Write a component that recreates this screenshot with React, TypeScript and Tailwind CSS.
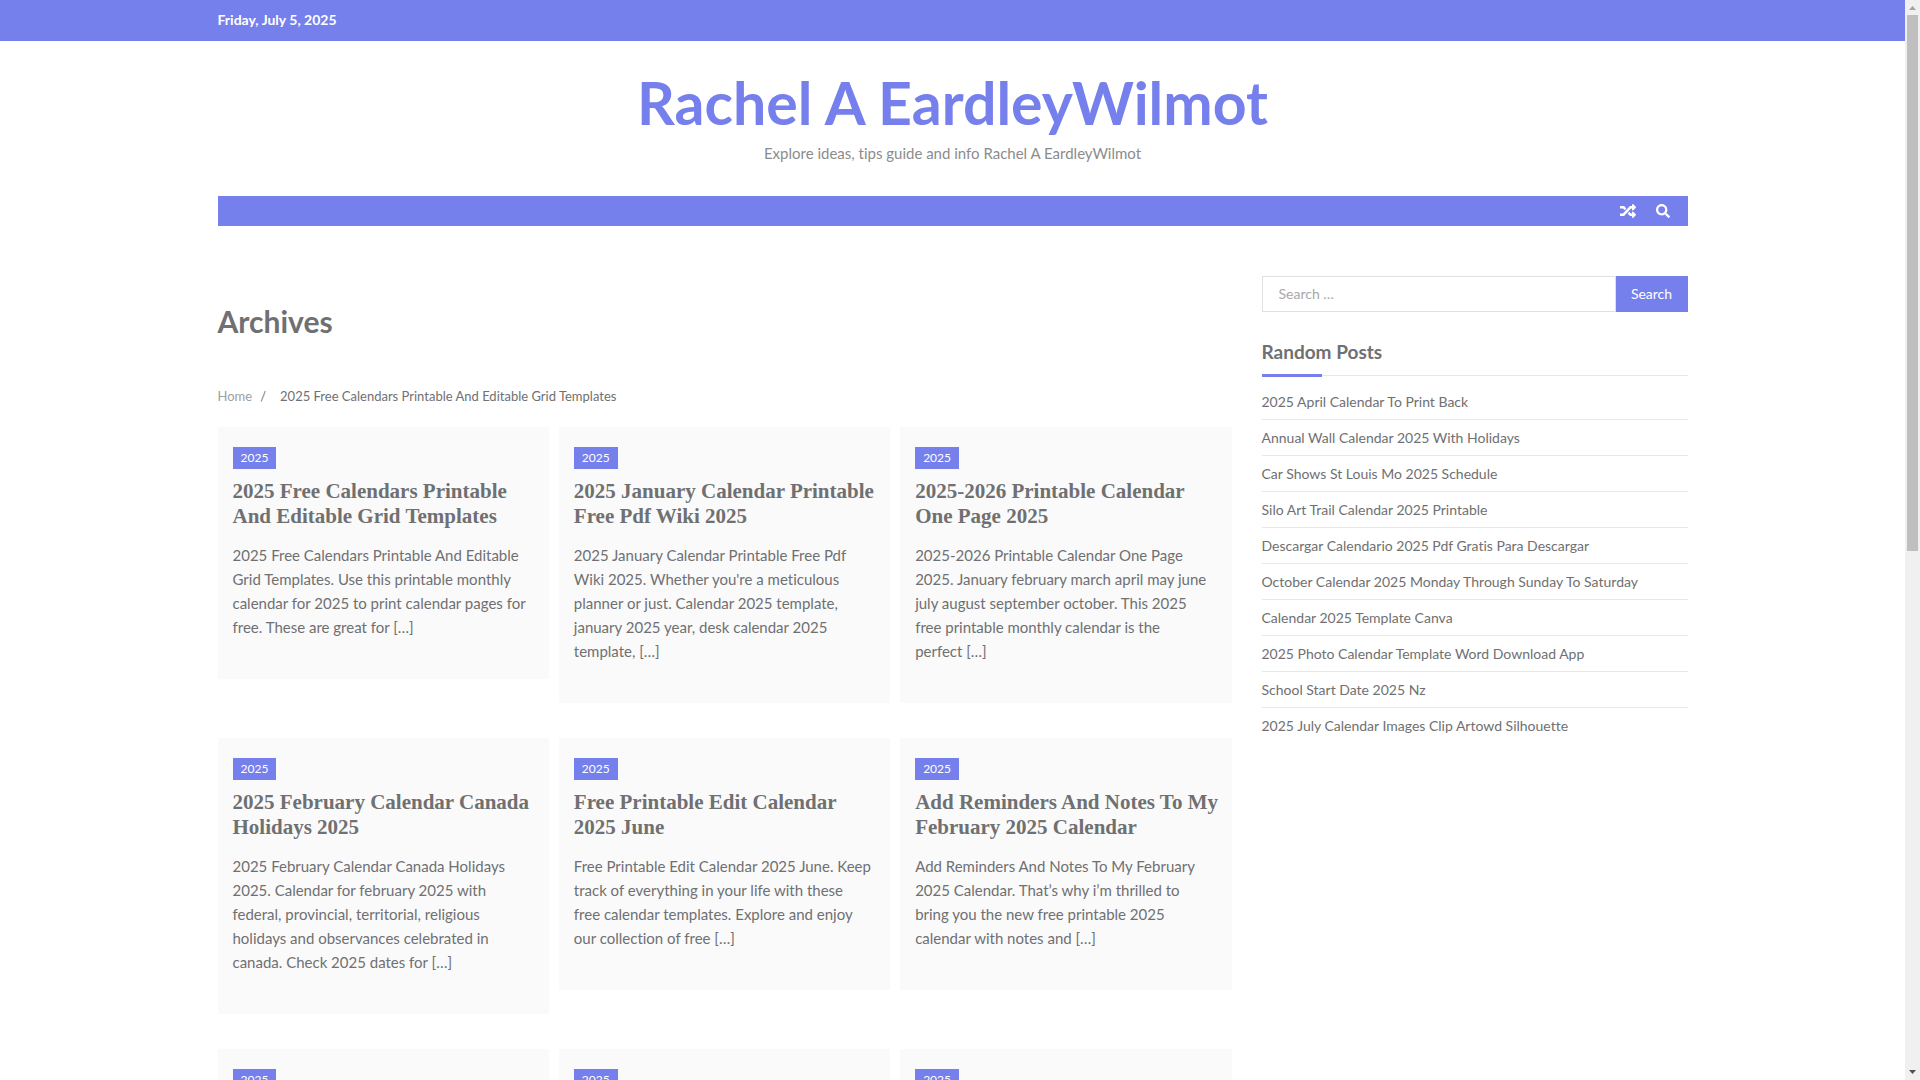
import { useState } from "react";
import { FaRandom, FaSearch } from "react-icons/fa";

type Post = { title: string; excerpt: string };

const posts: Post[] = [
  {
    title: "2025 Free Calendars Printable And Editable Grid Templates",
    excerpt:
      "2025 Free Calendars Printable And Editable Grid Templates. Use this printable monthly calendar for 2025 to print calendar pages for free. These are great for",
  },
  {
    title: "2025 January Calendar Printable Free Pdf Wiki 2025",
    excerpt:
      "2025 January Calendar Printable Free Pdf Wiki 2025. Whether you're a meticulous planner or just. Calendar 2025 template, january 2025 year, desk calendar 2025 template,",
  },
  {
    title: "2025-2026 Printable Calendar One Page 2025",
    excerpt:
      "2025-2026 Printable Calendar One Page 2025. January february march april may june july august september october. This 2025 free printable monthly calendar is the perfect",
  },
  {
    title: "2025 February Calendar Canada Holidays 2025",
    excerpt:
      "2025 February Calendar Canada Holidays 2025. Calendar for february 2025 with federal, provincial, territorial, religious holidays and observances celebrated in canada. Check 2025 dates for",
  },
  {
    title: "Free Printable Edit Calendar 2025 June",
    excerpt:
      "Free Printable Edit Calendar 2025 June. Keep track of everything in your life with these free\u00a0calendar templates. Explore and enjoy our collection of free",
  },
  {
    title: "Add Reminders And Notes To My February 2025 Calendar",
    excerpt:
      "Add Reminders And Notes To My February 2025 Calendar. That’s why i’m thrilled to bring you the new free printable 2025 calendar with notes and",
  },
  { title: "", excerpt: "" },
  { title: "", excerpt: "" },
  { title: "", excerpt: "" },
];

const randomPosts = [
  "2025 April Calendar To Print Back",
  "Annual Wall Calendar 2025 With Holidays",
  "Car Shows St Louis Mo 2025 Schedule",
  "Silo Art Trail Calendar 2025 Printable",
  "Descargar Calendario 2025 Pdf Gratis Para Descargar",
  "October Calendar 2025 Monday Through Sunday To Saturday",
  "Calendar 2025 Template Canva",
  "2025 Photo Calendar Template Word Download App",
  "School Start Date 2025 Nz",
  "2025 July Calendar Images Clip Artowd Silhouette",
];

function PostCard({ post }: { post: Post }) {
  return (
    <article className="bg-[#fafafa] px-[15px] pt-5 pb-10">
      <a href="#" className="block w-fit bg-[#7680ec] px-2 text-xs leading-[22px] text-white">
        2025
      </a>
      {post.title && (
        <h2 className="mt-[10px] -mr-2 font-['Liberation_Serif',serif] text-[21px] leading-[25px] font-bold">
          <a href="#">{post.title}</a>
        </h2>
      )}
      {/* the ellipsis never wraps on its own */}
      {post.excerpt && (
        <p className="mt-[14px] text-[15px] leading-6">{post.excerpt + "\u00a0[…]"}</p>
      )}
    </article>
  );
}

function Sidebar() {
  const [query, setQuery] = useState("");

  return (
    <aside className="w-[426px] shrink-0">
      <form className="flex h-9 text-sm" onSubmit={(e) => e.preventDefault()}>
        <input
          type="search"
          aria-label="Search for"
          placeholder="Search …"
          value={query}
          onChange={(e) => setQuery(e.target.value)}
          className="min-w-0 flex-1 border border-[#e0e0e0] px-4 outline-none placeholder:text-[#a9a9a9]"
        />
        <button type="submit" className="w-[72px] bg-[#7680ec] text-white">
          Search
        </button>
      </form>
      <h2 className="mt-[26px] border-b border-[#e8e8e8] text-[19px] leading-7 font-bold">
        <span className="block pb-2">Random Posts</span>
        <span className="-mb-[2px] block h-[3px] w-[60px] bg-[#7680ec]" />
      </h2>
      <ul className="mt-2 text-sm">
        {randomPosts.map((title) => (
          <li key={title} className="border-b border-[#e8e8e8] py-[7px] leading-[21px] last:border-b-0">
            <a href="#">{title}</a>
          </li>
        ))}
      </ul>
    </aside>
  );
}

function Scrollbar() {
  return (
    <div className="flex w-[15px] shrink-0 flex-col items-center bg-[#f0f0f0]">
      <svg width="15" height="15" viewBox="0 0 15 15" className="shrink-0">
        <path d="M4 10h7L7.5 6z" fill="#a3a3a3" />
      </svg>
      <div className="h-[calc(50%-4px)] w-[11px] bg-[#bfbfbf]" />
      <svg width="15" height="15" viewBox="0 0 15 15" className="mt-auto shrink-0">
        <path d="M4 5h7L7.5 9z" fill="#505050" />
      </svg>
    </div>
  );
}

export default function App() {
  return (
    <div className="flex h-screen bg-white font-[Lato,sans-serif] text-[#6f7072] [font-variant-ligatures:none]">
      <div className="min-w-0 flex-1 overflow-hidden">
        <div className="bg-[#7680ec] pb-px text-sm font-bold text-white">
          <div className="mx-auto max-w-[1470px] leading-10">Friday, July 5, 2025</div>
        </div>

        <div className="mx-auto max-w-[1470px]">
          <header className="pt-[29px] pb-[30px] text-center">
            <h1 className="text-[59px] leading-[66px] font-bold text-[#7680ec]">
              <a href="#">Rachel A EardleyWilmot</a>
            </h1>
            <p className="mt-[5px] text-[15px] leading-[25px] text-[#8c8c8c]">
              Explore ideas, tips guide and info Rachel A EardleyWilmot
            </p>
          </header>

          <nav className="flex h-[30px] items-center justify-end gap-5 bg-[#7680ec] pr-[18px] text-white">
            <a href="#" aria-label="View random post">
              <FaRandom size={16} />
            </a>
            <button type="button" aria-label="Open search">
              <FaSearch size={14} />
            </button>
          </nav>

          <div className="flex gap-[30px] pt-[50px]">
            <main className="min-w-0 flex-1">
              <h1 className="pt-[25px] text-[30px] leading-10 font-bold">Archives</h1>
              <div className="mt-[45px] flex text-[13px] leading-5">
                <a href="#" className="text-[#a0a0a0]">Home</a>
                <span className="mr-[14px] ml-2">/</span>
                <span>2025 Free Calendars Printable And Editable Grid Templates</span>
              </div>
              <div className="mt-[21px] grid grid-cols-3 items-start gap-x-[10px] gap-y-[35px]">
                {posts.map((post, i) => (
                  <PostCard key={i} post={post} />
                ))}
              </div>
            </main>
            <Sidebar />
          </div>
        </div>
      </div>
      <Scrollbar />
    </div>
  );
}
